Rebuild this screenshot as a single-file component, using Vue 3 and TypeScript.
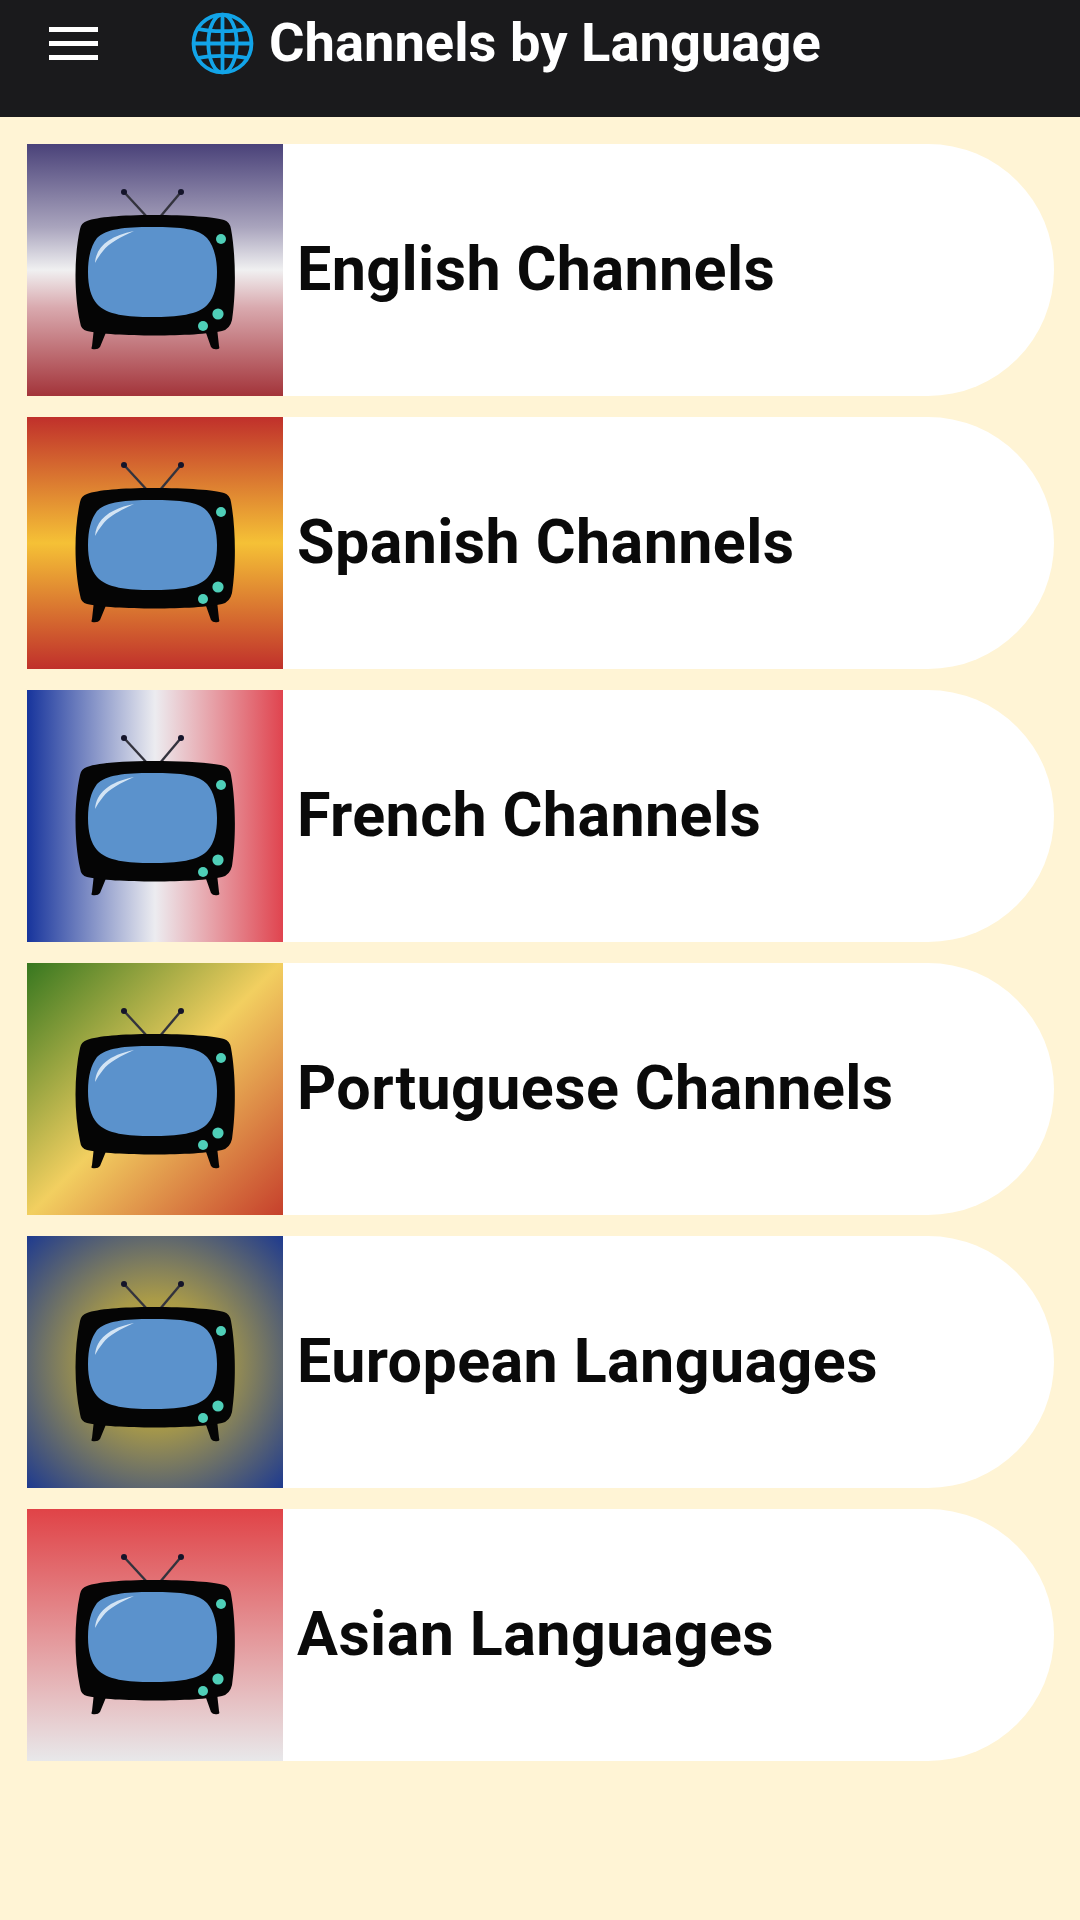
<template>
  <div class="page">
    <header class="top-bar">
      <button class="menu-btn" aria-label="Menu">
        <span></span>
        <span></span>
        <span></span>
      </button>
      <h1 class="title">
        <svg class="globe" viewBox="0 0 60 60" fill="none" stroke="#12a4e8" stroke-width="3.6">
          <circle cx="30" cy="30" r="27.6" />
          <ellipse cx="30" cy="30" rx="13.5" ry="27.6" />
          <path d="M30 2.4V57.6" />
          <path d="M2.4 30H57.6" />
          <path d="M6.5 16C20 19 40 19 53.5 16" />
          <path d="M6.5 44C20 41 40 41 53.5 44" />
        </svg>
        <span>Channels by Language</span>
      </h1>
    </header>

    <main class="list">
      <a v-for="item in items" :key="item.label" class="row">
        <div class="thumb" :class="item.bg">
          <svg class="tv" viewBox="0 0 256 252">
            <g stroke="#33333d" stroke-width="2.4">
              <path d="M97 48L120 73" />
              <path d="M154 48L133 73" />
            </g>
            <circle cx="97" cy="48" r="3" fill="#14142a" />
            <circle cx="154" cy="48" r="3" fill="#14142a" />
            <path d="M67 184L80 186L73 203Q71 206 65 205Q64 205 65 202Z" fill="#050505" />
            <path d="M178 186L190 184L192 202Q193 205 191 205Q186 206 184 203Z" fill="#050505" />
            <path
              d="M126 71C160 71 188 73 197 76Q203 78 204 85C209 112 209 150 205 176Q203 185 195 187C170 193 85 193 60 187Q54 186 53 178C47 150 47 112 53 85Q54 79 60 77C70 73 95 71 126 71Z"
              fill="#050505"
            />
            <path
              d="M125 83C155 83 172 85 180 94C187 102 190 115 190 128C190 143 187 153 181 160C172 171 150 173 125 173C100 173 80 171 70 160C64 153 61 143 61 128C61 113 64 102 70 94C79 85 97 83 125 83Z"
              fill="#5b92cc"
            />
            <path d="M68 119C69 103 82 92 107 87C94 93 82 99 76 107Q71 113 68 119Z" fill="#d3e4f4" />
            <circle cx="194" cy="95" r="5" fill="#4fcfb8" />
            <circle cx="191" cy="170" r="5.6" fill="#4fcfb8" />
            <circle cx="176" cy="182" r="5" fill="#4fcfb8" />
          </svg>
        </div>
        <span class="label">{{ item.label }}</span>
      </a>
    </main>
  </div>
</template>

<script setup lang="ts">
interface Item {
  label: string;
  bg: string;
}

const items: Item[] = [
  { label: "English Channels", bg: "bg-english" },
  { label: "Spanish Channels", bg: "bg-spanish" },
  { label: "French Channels", bg: "bg-french" },
  { label: "Portuguese Channels", bg: "bg-portuguese" },
  { label: "European Languages", bg: "bg-european" },
  { label: "Asian Languages", bg: "bg-asian" },
];
</script>

<style>
html,
body {
  margin: 0;
  background: #fff4d5;
}
</style>

<style scoped>
.page {
  min-height: 1920px;
  background: #fff4d5;
  font-family: Roboto, "Liberation Sans", sans-serif;
}

.top-bar {
  height: 117px;
  box-sizing: border-box;
  display: flex;
  align-items: flex-start;
  background: #1a1a1c;
  padding-left: 49px;
}

.menu-btn {
  width: 49px;
  margin-top: 27px;
  padding: 0;
  border: none;
  background: none;
  display: flex;
  flex-direction: column;
  gap: 9px;
}

.menu-btn span {
  display: block;
  height: 5px;
  background: #fff;
}

.title {
  margin: 0 0 0 93px;
  height: 84px;
  display: flex;
  align-items: center;
  gap: 15px;
  color: #fff;
  font-size: 54.3px;
  font-weight: 700;
  white-space: nowrap;
}

.globe {
  width: 63px;
  height: 63px;
  margin-top: 2px;
}

.list {
  display: flex;
  flex-direction: column;
  gap: 21px;
  padding: 27px 26px 0 27px;
}

.row {
  height: 252px;
  display: flex;
  align-items: center;
  background: #fff;
  border-radius: 0 126px 126px 0;
}

.thumb {
  width: 256px;
  height: 252px;
  flex-shrink: 0;
}

.tv {
  display: block;
  width: 256px;
  height: 252px;
}

.label {
  margin-left: 14px;
  padding-bottom: 3px;
  color: #0a0a0a;
  font-size: 61px;
  font-weight: 700;
  letter-spacing: 0.4px;
  white-space: nowrap;
}

.bg-english {
  background: linear-gradient(180deg, #4a4279 0%, #a9a4bd 33%, #f0f0f1 50%, #d9a9ae 65%, #a3343a 100%);
}

.bg-spanish {
  background: linear-gradient(180deg, #c0302b 0%, #f5c136 50%, #c0302b 100%);
}

.bg-french {
  background: linear-gradient(90deg, #17349c 0%, #ececf0 50%, #e0444f 100%);
}

.bg-portuguese {
  background: linear-gradient(135deg, #37771f 0%, #f2cf60 50%, #c6402c 100%);
}

.bg-european {
  background: radial-gradient(circle at 50% 50%, #c8ab3c 0%, #aa9b48 35%, #1e3a8f 100%);
}

.bg-asian {
  background: linear-gradient(180deg, #e04347 0%, #e8e8ea 100%);
}
</style>
